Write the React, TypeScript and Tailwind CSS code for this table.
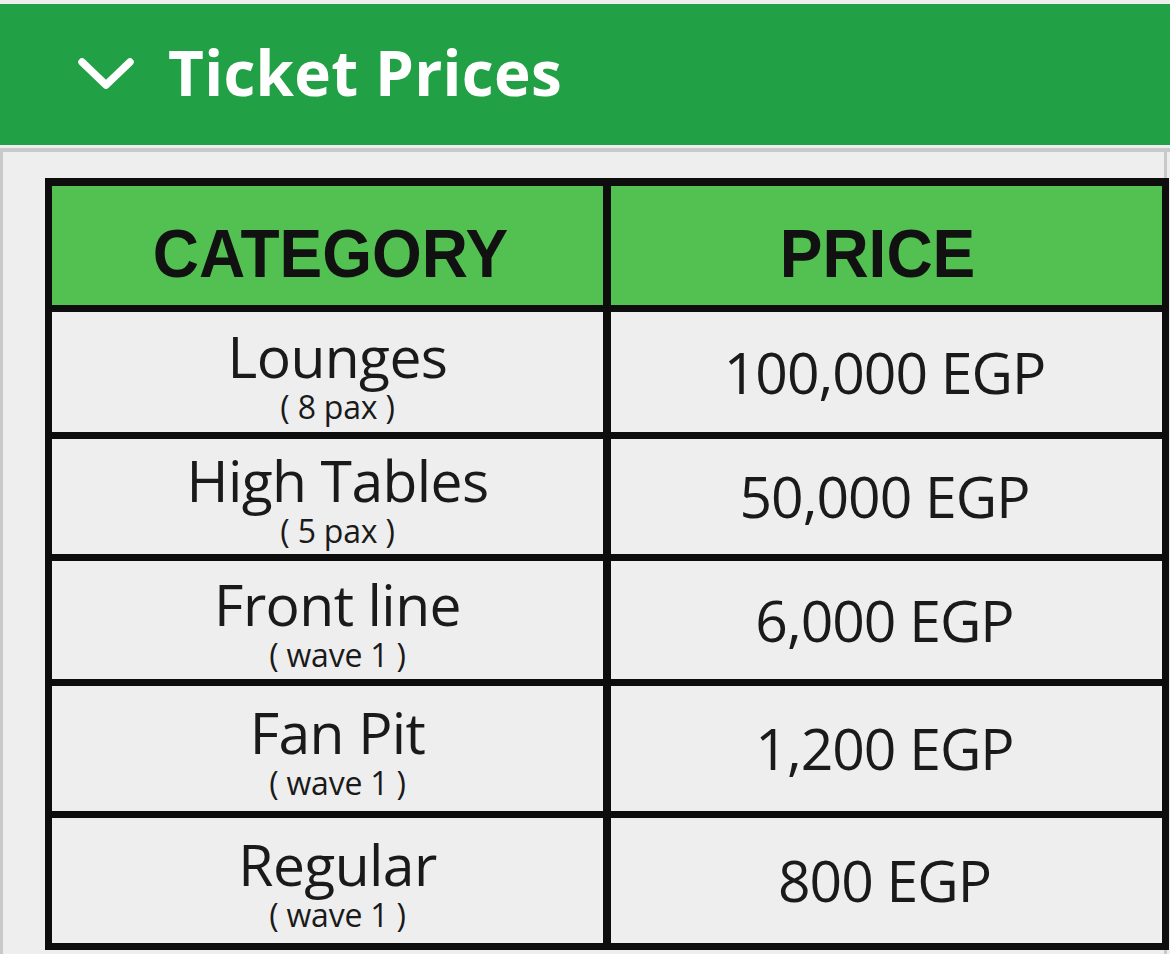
import React from "react";

const rows = [
  { name: "Lounges", sub: "( 8 pax )", price: "100,000 EGP", h: "h-[120px]" },
  { name: "High Tables", sub: "( 5 pax )", price: "50,000 EGP", h: "h-[115px]" },
  { name: "Front line", sub: "( wave 1 )", price: "6,000 EGP", h: "h-[118px]" },
  { name: "Fan Pit", sub: "( wave 1 )", price: "1,200 EGP", h: "h-[125px]" },
  { name: "Regular", sub: "( wave 1 )", price: "800 EGP", h: "h-[125px]" },
];

export default function App() {
  return (
    <div className="w-[1170px] h-[954px] overflow-hidden bg-[#eeeeee]" style={{ fontFamily: '"Open Sans", sans-serif' }}>
      <div className="h-[4px]" />
      <div className="h-[141px] bg-[#22a045] flex items-center pl-[78px] pb-[6px]">
        <svg width="56" height="36" viewBox="0 0 56 36" className="mr-[34px] mt-[4px]">
          <path d="M4 6 L28 29 L52 6" fill="none" stroke="white" strokeWidth="7.5" strokeLinecap="round" strokeLinejoin="round" />
        </svg>
        <span className="text-white font-bold text-[62px] leading-none tracking-[0.3px]">Ticket Prices</span>
      </div>
      <div className="h-[3px]" />
      <div className="h-[4px] bg-[#c9c9c9]" />
      <div className="w-[1167px] h-[802px] border-l-[3px] border-r-[3px] border-[#c9c9c9] bg-[#eeeeee] pt-[26px] pl-[42px]">
        <div className="w-[1124px] bg-[#0d0d0d] p-[7px] pt-[8px] flex flex-col gap-[7px]">
          <div className="grid grid-cols-[551px_551px] gap-x-[8px] h-[119px]">
            <div className="bg-[#52c152] flex items-center justify-center pt-[14px] pl-[6px]">
              <span className="text-[64px] font-bold text-[#111] leading-none scale-y-[1.08]" style={{ fontFamily: '"Liberation Sans", Arial, sans-serif' }}>CATEGORY</span>
            </div>
            <div className="bg-[#52c152] flex items-center justify-center pt-[14px] pr-[18px]">
              <span className="text-[64px] font-bold text-[#111] leading-none scale-y-[1.08]" style={{ fontFamily: '"Liberation Sans", Arial, sans-serif' }}>PRICE</span>
            </div>
          </div>
          {rows.map((r) => (
            <div key={r.name} className={`grid grid-cols-[551px_551px] gap-x-[8px] ${r.h}`}>
              <div className="bg-[#eeeeee] flex flex-col items-center justify-center pt-[8px] pl-[20px] text-[#1a1a1a]">
                <span className="text-[57px] leading-[54px] tracking-[-0.6px]">{r.name}</span>
                <span className="text-[32px] leading-[34px] mt-[7px] tracking-[-0.2px]">{r.sub}</span>
              </div>
              <div className="bg-[#eeeeee] flex items-center justify-center pr-[4px] text-[#1a1a1a]">
                <span className="text-[57px] leading-none tracking-[-1px]">{r.price}</span>
              </div>
            </div>
          ))}
        </div>
      </div>
    </div>
  );
}
